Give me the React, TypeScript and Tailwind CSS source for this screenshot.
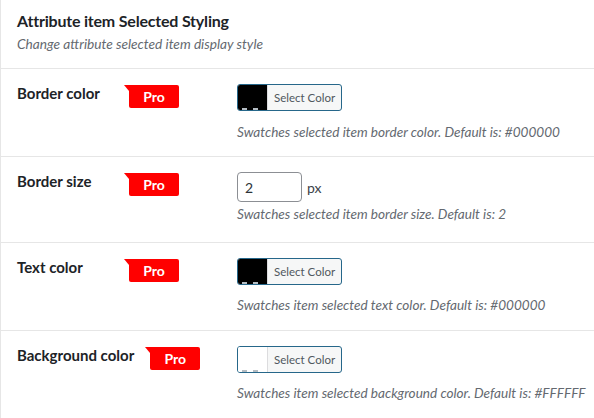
import React from "react";

const font = { fontFamily: "Lato, 'Open Sans', sans-serif" };

function ProBadge() {
  return (
    <span className="relative ml-[16px] inline-flex h-[23px] w-[50px] items-center justify-center rounded-b-[2px] rounded-tr-[2px] bg-[#ff0000] text-[14px] font-bold text-white">
      <span className="absolute left-[-5px] top-0 h-0 w-0 border-l-[5px] border-t-[6px] border-l-transparent border-t-[#ff0000]" />
      Pro
    </span>
  );
}

function ColorButton({ color }: { color: string }) {
  return (
    <button className="flex h-[27px] w-[105px] overflow-hidden rounded-[3px] border border-[#26678a] bg-[#f6f7f7] text-left">
      <span className="relative h-full w-[30px] shrink-0 border-r border-[#dcdcde]" style={{ background: color }}>
        <span className="absolute bottom-0 left-[4px] h-[2px] w-[5px] bg-[#b4bcc2]" />
        <span className="absolute bottom-0 left-[15px] h-[2px] w-[5px] bg-[#b4bcc2]" />
      </span>
      <span className="flex flex-1 items-center pl-[6px] text-[11.5px] text-[#50575e]">Select Color</span>
    </button>
  );
}

function SizeInput() {
  return (
    <div className="flex items-center">
      <div className="flex h-[30px] w-[65px] items-center rounded-[4px] border border-[#8c8f94] bg-white pl-[7px] text-[14px] text-[#2c3338]">
        2
      </div>
      <span className="ml-[5px] text-[14px] text-[#3c434a]">px</span>
    </div>
  );
}

function Row({
  label,
  control,
  desc,
  descGap,
  height,
}: {
  label: string;
  control: React.ReactNode;
  desc: string;
  descGap: string;
  height: string;
}) {
  return (
    <div className={`flex ${height} border-t border-[#e6e6e6]`}>
      <div className="flex w-[236px] shrink-0 items-start pl-[16px] pt-[15px]">
        <span className="inline-block min-w-[96px] text-[15px] font-bold leading-[18px] text-[#1d2327]">{label}</span>
        <span>
          <ProBadge />
        </span>
      </div>
      <div className="flex flex-col pt-[15px]">
        {control}
        <p className={`${descGap} text-[13.6px] italic text-[#646970]`}>{desc}</p>
      </div>
    </div>
  );
}

export default function App() {
  return (
    <div className="h-[418px] w-[594px] overflow-hidden border-l border-[#e6e6e6] bg-white" style={font}>
      <div className="h-[68px] pl-[16px] pt-[10px]">
        <h2 className="text-[16px] font-bold leading-[22px] tracking-[-0.2px] text-[#1d2327]">
          Attribute item Selected Styling
        </h2>
        <p className="mt-[2px] text-[13.7px] italic text-[#646970]">Change attribute selected item display style</p>
      </div>
      <Row
        label="Border color"
        control={<ColorButton color="#000000" />}
        desc="Swatches selected item border color. Default is: #000000"
        descGap="mt-[11px]"
        height="h-[88px]"
      />
      <Row
        label="Border size"
        control={<SizeInput />}
        desc="Swatches selected item border size. Default is: 2"
        descGap="mt-[2px]"
        height="h-[86px]"
      />
      <Row
        label="Text color"
        control={<ColorButton color="#000000" />}
        desc="Swatches item selected text color. Default is: #000000"
        descGap="mt-[10px]"
        height="h-[88px]"
      />
      <Row
        label="Background color"
        control={<ColorButton color="#ffffff" />}
        desc="Swatches item selected background color. Default is: #FFFFFF"
        descGap="mt-[10px]"
        height="h-[88px]"
      />
    </div>
  );
}
